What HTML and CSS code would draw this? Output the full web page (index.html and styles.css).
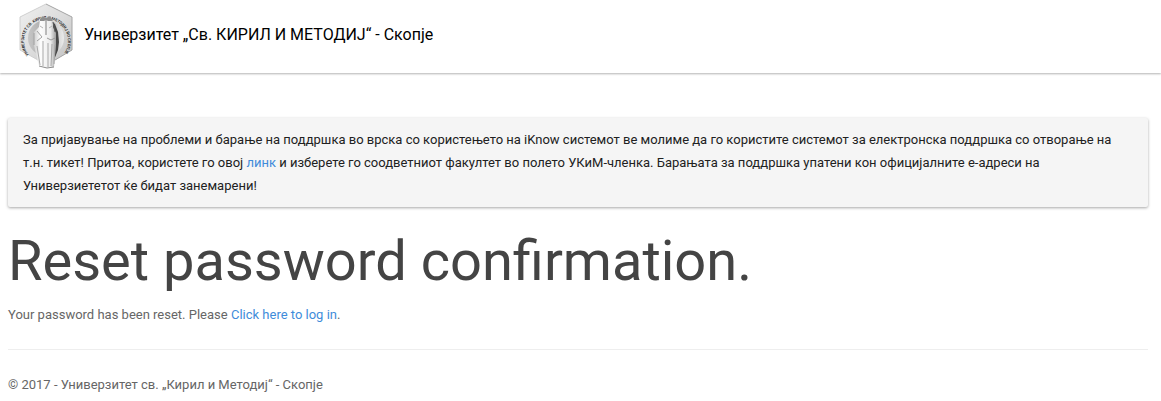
FILE: index.html
```html
<!DOCTYPE html>
<html lang="mk">
<head>
  <meta charset="UTF-8" />
  <meta name="viewport" content="width=device-width, initial-scale=1.0"/>
  <title>Reset password confirmation</title>
  <link rel="stylesheet" href="styles.css">
</head>
<body>

  <header class="navbar">
    <svg class="logo" viewBox="0 0 54 66" aria-hidden="true">
      <defs>
        <linearGradient id="metal" x1="0" y1="0" x2="1" y2="1">
          <stop offset="0" stop-color="#f0f0f0"/>
          <stop offset="0.55" stop-color="#dadada"/>
          <stop offset="1" stop-color="#c0c0c0"/>
        </linearGradient>
        <linearGradient id="field">
          <stop offset="0" stop-color="#c6c6c6"/>
          <stop offset="0.5" stop-color="#a8a8a8"/>
          <stop offset="1" stop-color="#ececec"/>
        </linearGradient>
        <linearGradient id="robe">
          <stop offset="0" stop-color="#cfcfcf"/>
          <stop offset="0.3" stop-color="#fdfdfd"/>
          <stop offset="0.75" stop-color="#ececec"/>
          <stop offset="1" stop-color="#a0a0a0"/>
        </linearGradient>
        <path id="ring" d="M10 52A22 22 0 1 1 44 52"/>
      </defs>
      <path d="M27 1L53 14V47L28 62L1 47V14Z" fill="url(#metal)"/>
      <path d="M27 1L53 14V47L36 57" stroke="#a4a4a4" fill="none"/>
      <path d="M27 1L1 14V47L19 57" stroke="#d0d0d0" fill="none"/>
      <circle cx="27" cy="35" r="18" fill="url(#field)"/>
      <text class="logo-text"><textPath href="#ring">УНИВЕРЗИТЕТ  СВ.  КИРИЛ  И  МЕТОДИЈ  ВО  СКОПЈЕ</textPath></text>
      <!-- the two saints -->
      <path d="M32 18L36 21L39 29L40 39L39 47L35 57L32 43Z" fill="#484848"/>
      <path d="M21 16L24 13L27 15L31 13L34 17V24L37 30V41L35 64L28 65L20 63L15 43V29L20 24Z" fill="url(#robe)"/>
      <path d="M21 16L24 13L27 15L31 13L34 17L33 18H29L27 17L25 18H21Z" fill="#8e8e8e"/>
      <path d="M27 17V32" stroke="#808080" fill="none"/>
      <path d="M21 23L24 25M30 25L33 23" stroke="#b4b4b4" fill="none"/>
      <path d="M34 19L36 29" stroke="#5c5c5c" fill="none"/>
      <path d="M18 28L23 34L18 38M15 30V42" stroke="#a2a2a2" fill="none"/>
      <path d="M28 35L32 37L36 35" stroke="#999" fill="none"/>
      <path d="M18 43L21 62M24 38V63M29 40V64M33 41L32 63M36 42L35 61" stroke="#a8a8a8" fill="none"/>
      <path d="M20 63L28 65L35 64" stroke="#8e8e8e" fill="none"/>
    </svg>
    <div class="brand">Универзитет „Св. КИРИЛ И МЕТОДИЈ“ - Скопје</div>
  </header>

  <main class="container">
    <div class="notice">
      За пријавување на проблеми и барање на поддршка во врска со користењето на iKnow системот ве молиме да го користите системот за електронска поддршка со отворање на т.н. тикет! Притоа, користете го овој <a href="#">линк</a> и изберете го соодветниот факултет во полето УКиМ-членка. Барањата за поддршка упатени кон официјалните е-адреси на Универзиететот ќе бидат занемарени!
    </div>

    <h1>Reset password confirmation.</h1>
    <p>Your password has been reset. Please <a href="#">Click here to log in</a>.</p>

    <hr>
    <footer>
      <p>© 2017 - Универзитет св. „Кирил и Методиј“ - Скопје</p>
    </footer>
  </main>

</body>
</html>
```

FILE: styles.css
```css
* {
  box-sizing: border-box;
}
body {
  margin: 0;
  font-family: Roboto, "Liberation Sans", sans-serif;
  font-size: 13px;
  line-height: 23px;
  color: #666;
  background-color: #fff;
}
a {
  color: #3f8cda;
  text-decoration: none;
}
a:hover {
  text-decoration: underline;
}
.navbar {
  display: flex;
  align-items: flex-start;
  gap: 11px;
  padding: 3px 19px 4px;
  box-shadow: 0 1px 2px rgba(0, 0, 0, 0.3);
}
.logo {
  width: 54px;
  height: 66px;
}
.logo-text {
  font-family: Roboto, sans-serif;
  font-size: 4px;
  font-weight: 500;
  fill: #111;
}
.brand {
  padding: 20px 0;
  font-size: 16px;
  color: #000;
}
.container {
  padding: 45px 13px 0 8px;
}
.notice {
  padding: 10px 15px;
  color: #212121;
  background-color: #f5f5f5;
  border-radius: 2px;
  box-shadow: 0 1px 3px rgba(0, 0, 0, 0.35);
}
h1 {
  margin: 23px 0 11px;
  font-size: 56px;
  font-weight: 400;
  line-height: 62px;
  color: #444;
}
p {
  margin: 0;
}
hr {
  margin: 23px 0;
  border: 0;
  border-top: 1px solid #eee;
}
```
